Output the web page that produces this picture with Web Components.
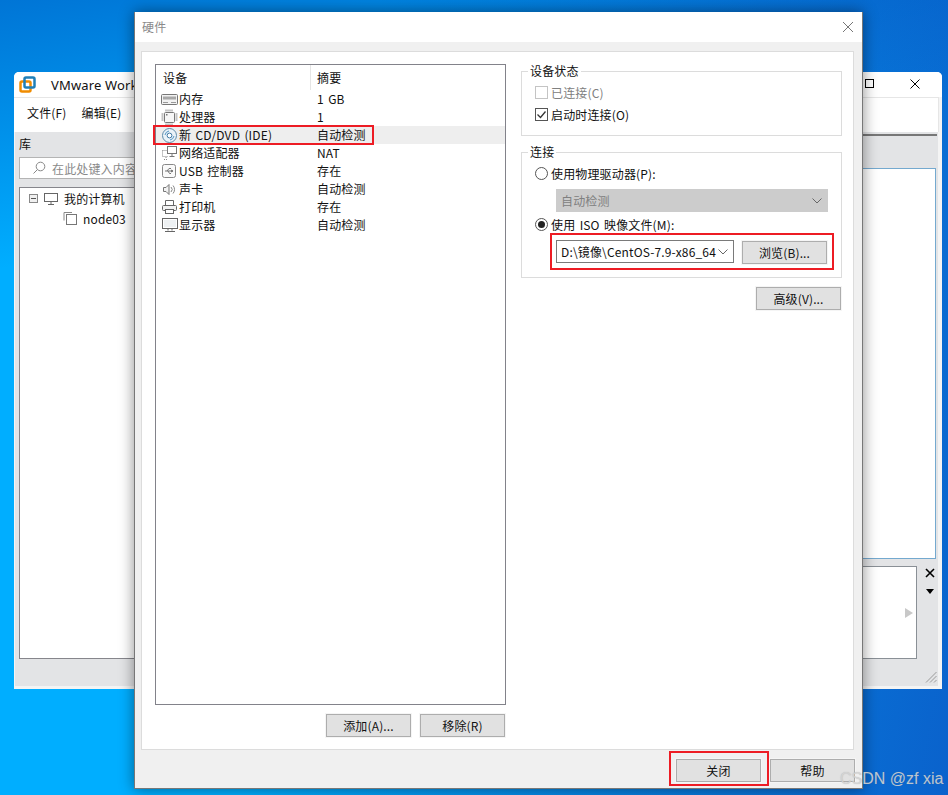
<!DOCTYPE html>
<html lang="zh">
<head>
<meta charset="utf-8">
<title>硬件</title>
<style>
html,body{margin:0;padding:0;height:100%;overflow:hidden}
body{font:12px "Noto Sans CJK SC","Noto Sans",sans-serif;color:#111;letter-spacing:.15px;word-spacing:1.5px}
</style>
</head>
<body>
<desk-top>
  <back-window></back-window>
  <hw-dialog></hw-dialog>
  <water-mark>CSDN @zf xia</water-mark>
</desk-top>

<script>
const FONT = '"Noto Sans CJK SC","Noto Sans",sans-serif';

const ICONS = {
  memory: '<rect x="0.500" y="3.500" width="16" height="10" rx="1" fill="#f2f2f2" stroke="#777"/><path d="M2 5.500h13v3H2z" fill="#a8a8a8"/><path d="M2 11.500h5M10 11.500h5" stroke="#999"/>',
  cpu: '<rect x="3.500" y="3.500" width="10" height="10" rx="1" fill="#f6f6f6" stroke="#777"/><path d="M5 .5v2M7 .5v2M9 .5v2M11 .5v2M5 14.500v2M7 14.500v2M9 14.500v2M11 14.500v2M.5 5h2M.5 7h2M.5 9h2M.5 11h2M14.500 5h2M14.500 7h2M14.500 9h2M14.500 11h2" stroke="#888"/><path d="M5 5h1.500v1.500H5z" fill="#777"/>',
  cd: '<circle cx="8.500" cy="8.500" r="7" fill="#eaf2f8" stroke="#5f8cab"/><circle cx="8.500" cy="8.500" r="2.400" fill="#fff" stroke="#3f78a3"/><path d="M4 8a5 5 0 0 1 4-4M13 9a5 5 0 0 1-4 4" stroke="#4f93c4" fill="none"/>',
  net: '<rect x="6.500" y="1.500" width="9" height="7" fill="#fff" stroke="#777"/><path d="M11 9v2M8.500 11.500h5" stroke="#777"/><path d="M1.500 5.500h5M1.500 5.500v6h6M3 14.500h4M5 12v2" stroke="#888" stroke-dasharray="1 1" fill="none"/>',
  usb: '<rect x="1.500" y="1.500" width="13" height="13" rx="2" fill="#fafafa" stroke="#888"/><path d="M4 8h8M6 8l2-2.500h2M7 8l1.500 2.500H10M12 8l-1.500-1v2z" stroke="#777" fill="none"/>',
  sound: '<path d="M2.500 6.500h2.500l3-3v10l-3-3H2.500z" fill="#f2f2f2" stroke="#777"/><path d="M10 6a3.500 3.500 0 0 1 0 5M12 4.500a6 6 0 0 1 0 8" stroke="#888" fill="none"/>',
  printer: '<path d="M4.500 6V1.500h8V6" fill="#fff" stroke="#666"/><rect x="1.500" y="6.500" width="14" height="5" rx="1" fill="#f2f2f2" stroke="#666"/><rect x="4.500" y="10.500" width="8" height="4" fill="#fff" stroke="#666"/>',
  monitor: '<rect x="1.500" y="1.500" width="15" height="10" fill="#fff" stroke="#666"/><path d="M3 3h12v7H3z" fill="#eef1f3"/><path d="M7 12v1.500M11 12v1.500" stroke="#666"/><path d="M4 14.500h10" stroke="#666"/>'
};

class WinButton extends HTMLElement {
  constructor() {
    super();
    this.attachShadow({ mode: 'open' }).innerHTML = `
    <style>
      :host{display:inline-flex;align-items:center;justify-content:center;box-sizing:border-box;
        width:85px;height:23px;background:#e1e1e1;border:1px solid #adadad;outline:1px solid #f5f5f5;
        font:12px ${FONT};color:#111;flex:none}
    </style><slot></slot>`;
  }
}
customElements.define('win-button', WinButton);

class RedMark extends HTMLElement {
  constructor() {
    super();
    this.attachShadow({ mode: 'open' }).innerHTML = `
    <style>
      :host{display:block;position:relative}
      i{position:absolute;inset:var(--inset,0);border:2px solid #ed1c24;pointer-events:none;z-index:2}
    </style><slot></slot><i></i>`;
  }
}
customElements.define('red-mark', RedMark);

class HwRow extends HTMLElement {
  constructor() {
    super();
    this.attachShadow({ mode: 'open' });
  }
  connectedCallback() {
    const icon = this.getAttribute('icon');
    this.shadowRoot.innerHTML = `
    <style>
      :host{display:grid;grid-template-columns:155px 1fr;height:18px;align-items:center;line-height:18px}
      :host([selected]){background:#eeeeee}
      .dev{display:flex;align-items:center;padding-left:5px;gap:1px;white-space:pre}
      svg{width:17px;height:17px;flex:none}
      .sum{padding-left:6px}
    </style>
    <div class="dev"><svg viewBox="0 0 17 17">${ICONS[icon]}</svg><span>${this.getAttribute('name')}</span></div>
    <div class="sum">${this.getAttribute('sum')}</div>`;
  }
}
customElements.define('hw-row', HwRow);

class HwList extends HTMLElement {
  constructor() {
    super();
    this.attachShadow({ mode: 'open' }).innerHTML = `
    <style>
      :host{display:block;box-sizing:border-box;width:351px;height:641px;background:#fff;border:1px solid #82828a}
      header{display:grid;grid-template-columns:155px 1fr;height:25px;line-height:25px}
      header div:first-child{padding-left:7px;border-right:1px solid #e5e5e5;box-sizing:border-box}
      header div:last-child{padding-left:6px}
    </style>
    <header><div>设备</div><div>摘要</div></header>
    <slot></slot>`;
  }
}
customElements.define('hw-list', HwList);

class GroupBox extends HTMLElement {
  constructor() {
    super();
    this.attachShadow({ mode: 'open' });
  }
  connectedCallback() {
    this.shadowRoot.innerHTML = `
    <style>
      :host{display:block}
      fieldset{margin:0;border:1px solid #dcdcdc;padding:var(--pad);min-width:0}
      legend{margin-left:-7px;padding:0 2px;line-height:14px;font-size:12px}
    </style>
    <fieldset><legend>${this.getAttribute('label')}</legend><slot></slot></fieldset>`;
  }
}
customElements.define('group-box', GroupBox);

class OptRow extends HTMLElement {
  constructor() {
    super();
    this.attachShadow({ mode: 'open' });
  }
  connectedCallback() {
    const type = this.getAttribute('type');
    const on = this.hasAttribute('on');
    const off = this.hasAttribute('disabled');
    let mark;
    if (type === 'radio') {
      mark = `<circle cx="6.500" cy="6.500" r="6" fill="#fff" stroke="#555"/>` + (on ? `<circle cx="6.500" cy="6.500" r="3.500" fill="#222"/>` : '');
    } else {
      mark = `<rect x="0.500" y="0.500" width="12" height="12" fill="#fff" stroke="${off ? '#c4c4c4' : '#555'}"/>` + (on ? `<path d="M2.500 6.500l3 3 5-6" fill="none" stroke="#333" stroke-width="1.300"/>` : '');
    }
    this.shadowRoot.innerHTML = `
    <style>
      :host{display:flex;align-items:center;height:22px;gap:3px;white-space:pre;color:${off ? '#808080' : 'inherit'}}
      svg{width:13px;height:13px;flex:none}
    </style>
    <svg viewBox="0 0 13 13">${mark}</svg><slot></slot>`;
  }
}
customElements.define('opt-row', OptRow);

class DropBox extends HTMLElement {
  constructor() {
    super();
    this.attachShadow({ mode: 'open' }).innerHTML = `
    <style>
      :host{display:flex;align-items:center;justify-content:space-between;box-sizing:border-box;height:23px;padding:0 5px 0 4px;
        background:#fff;border:1px solid #7a7a7a;white-space:pre;overflow:hidden}
      :host([disabled]){background:#cccccc;border-color:#cccccc;color:#808080}
      svg{width:10px;height:6px;flex:none}
    </style>
    <slot></slot><svg viewBox="0 0 10 6"><path d="M.5.5L5 5 9.500.5" fill="none" stroke="#666"/></svg>`;
  }
}
customElements.define('drop-box', DropBox);

class HwDialog extends HTMLElement {
  constructor() {
    super();
    this.attachShadow({ mode: 'open' }).innerHTML = `
    <style>
      :host{position:absolute;left:134px;top:12px;width:729px;height:777px;box-sizing:border-box;
        display:flex;flex-direction:column;background:#f0f0f0;border:1px solid #777;border-top:0;
        box-shadow:0 0 14px rgba(0,0,0,.45);color:#111}
      .title{height:30px;flex:none;background:#fff;display:flex;align-items:center;justify-content:space-between;
        padding:0 8px 1px 7px;box-sizing:border-box;color:#8a8a8a}
      .title svg{width:12px;height:12px}
      .panel{margin:9px 8px 0 6px;height:699px;box-sizing:border-box;flex:none;background:#fff;border:1px solid #dcdcdc;
        padding:12px 0 0 13px;display:grid;grid-template-columns:351px 321px;column-gap:15px;align-content:start}
      .left{display:flex;flex-direction:column;gap:9px}
      .btns{display:flex;justify-content:flex-end;gap:9px;padding-right:1px}
      .right{display:flex;flex-direction:column}
      .st{--pad:3px 0 10px 13px}
      .cn{--pad:3px 0 13px 13px;margin-top:9px}
      .sel{margin:5px 0 1px 21px;width:272px}
      .iso{display:flex;gap:8px}
      .iso drop-box{width:178px}
      .iso win-button{margin-top:1px}
      .isomark{--inset:-7px -7px -6px -6px;width:271px;margin:5px 0 0 21px}
      .adv{align-self:flex-end;margin:9px 1px 0 0}
      .foot{flex:1;display:flex;align-items:flex-start;justify-content:flex-end;gap:9px;padding:9px 7px 0 0;box-sizing:border-box}
      .foot red-mark{--inset:-8px -8px -4px -7px}
      .foot win-button{display:flex}
    </style>
    <div class="title"><span>硬件</span><svg viewBox="0 0 12 12"><path d="M1 1l10 10M11 1L1 11" stroke="#777" fill="none"/></svg></div>
    <div class="panel">
      <div class="left">
        <hw-list>
          <hw-row icon="memory" name="内存" sum="1 GB"></hw-row>
          <hw-row icon="cpu" name="处理器" sum="1"></hw-row>
          <red-mark style="--inset:-1px 131px -1px -3px"><hw-row selected icon="cd" name="新 CD/DVD (IDE)" sum="自动检测"></hw-row></red-mark>
          <hw-row icon="net" name="网络适配器" sum="NAT"></hw-row>
          <hw-row icon="usb" name="USB 控制器" sum="存在"></hw-row>
          <hw-row icon="sound" name="声卡" sum="自动检测"></hw-row>
          <hw-row icon="printer" name="打印机" sum="存在"></hw-row>
          <hw-row icon="monitor" name="显示器" sum="自动检测"></hw-row>
        </hw-list>
        <div class="btns"><win-button>添加(A)...</win-button><win-button>移除(R)</win-button></div>
      </div>
      <div class="right">
        <group-box class="st" label="设备状态">
          <opt-row type="check" disabled>已连接(C)</opt-row>
          <opt-row type="check" on>启动时连接(O)</opt-row>
        </group-box>
        <group-box class="cn" label="连接">
          <opt-row type="radio">使用物理驱动器(P):</opt-row>
          <drop-box class="sel" disabled>自动检测</drop-box>
          <opt-row type="radio" on>使用 ISO 映像文件(M):</opt-row>
          <red-mark class="isomark">
            <div class="iso"><drop-box>D:\\镜像\\CentOS-7.9-x86_64</drop-box><win-button>浏览(B)...</win-button></div>
          </red-mark>
        </group-box>
        <win-button class="adv">高级(V)...</win-button>
      </div>
    </div>
    <div class="foot">
      <red-mark><win-button>关闭</win-button></red-mark>
      <win-button>帮助</win-button>
    </div>`;
  }
}
customElements.define('hw-dialog', HwDialog);

class BackWindow extends HTMLElement {
  constructor() {
    super();
    this.attachShadow({ mode: 'open' }).innerHTML = `
    <style>
      :host{position:absolute;left:14px;top:72px;width:928px;height:617px;display:flex;flex-direction:column;
        background:#f4f4f4;border-radius:5px 5px 0 0;overflow:hidden;color:#111}
      .bar{height:25px;flex:none;background:#fff;display:flex;align-items:center;padding-left:5px}
      .logo{width:17px;height:17px;flex:none}
      .name{margin-left:15px;font:13px "Noto Sans",sans-serif;white-space:nowrap;flex:1;word-spacing:0}
      .ctl{display:flex;align-items:center;padding-bottom:2px}
      .max{width:7px;height:7px;border:1px solid #000;margin-right:36px}
      .cls{width:10px;height:10px;margin-right:22px}
      .menu{height:35px;flex:none;box-sizing:border-box;background:#fff;border-top:1px solid #e6e6e6;border-right:1px solid #e6e6e6;
        margin-right:3px;display:flex;align-items:center;gap:15px;padding:0 0 5px 13px}
      .body{flex:1;background:#e3e4e6;margin:0 4px 3px 1px;display:grid;grid-template-columns:294px 1fr;position:relative}
      .side{padding:0 0 27px 4px;display:flex;flex-direction:column}
      .lib{height:25px;line-height:24px;flex:none}
      .search{height:22px;box-sizing:border-box;background:#fff;border:1px solid #b4b4b4;display:flex;align-items:center;gap:6px;
        padding-left:12px;color:#8a8a8a;white-space:nowrap;overflow:hidden;flex:none}
      .search svg{width:14px;height:14px;flex:none}
      .tree{flex:1;margin-top:8px;background:#fff;border:1px solid #86868c}
      .node{display:flex;align-items:center;height:20px;white-space:nowrap}
      .node svg{flex:none}
      .main{display:flex;flex-direction:column;padding:2px 0 27px 0}
      .tabline{height:2px;background:#777;flex:none;margin-right:1px}
      .top{flex:1;margin:32px 2px 0 0;background:#fff;border:1px solid #74a9cf}
      .low{display:flex;margin-top:7px;height:93px;flex:none}
      .summary{flex:1;background:#fff;border:1px solid #8a9096;display:flex;align-items:center;justify-content:flex-end;padding-right:3px}
      .summary svg{width:8px;height:10px}
      .tools{width:21px;box-sizing:border-box;flex:none;display:flex;flex-direction:column;align-items:center;padding:2px 0 0 4px;gap:11px}
      .grip{position:absolute;right:1px;bottom:3px;width:12px;height:12px}
    </style>
    <div class="bar">
      <svg class="logo" viewBox="0 0 17 17">
        <rect x="1.500" y="5.500" width="10" height="10" rx="1.500" fill="none" stroke="#f08c00" stroke-width="2.500"/>
        <rect x="5.500" y="1.500" width="10" height="10" rx="1.500" fill="none" stroke="#1f7fb8" stroke-width="2.500"/>
      </svg>
      <div class="name">VMware Work</div>
      <div class="ctl"><div class="max"></div><svg class="cls" viewBox="0 0 10 10"><path d="M.5.5l9 9M9.500.5l-9 9" stroke="#000" fill="none"/></svg></div>
    </div>
    <div class="menu"><span>文件(F)</span><span>编辑(E)</span></div>
    <div class="body">
      <div class="side">
        <div class="lib">库</div>
        <div class="search">
          <svg viewBox="0 0 14 14"><circle cx="8.500" cy="5.500" r="4.300" fill="none" stroke="#888"/><path d="M5.500 8.500L1.500 12.500" stroke="#888" fill="none"/></svg>
          <span>在此处键入内容</span>
        </div>
        <div class="tree">
          <div class="node" style="padding-left:9px;gap:6px">
            <svg width="9" height="9" viewBox="0 0 9 9"><rect x=".5" y=".5" width="8" height="8" fill="#f0f0f0" stroke="#888"/><path d="M2 4.500h5" stroke="#555"/></svg>
            <svg width="14" height="13" viewBox="0 0 14 13"><rect x=".5" y="1.500" width="13" height="8" fill="#fff" stroke="#666"/><path d="M7 10v2M4 12.500h6" stroke="#666"/></svg>
            <span>我的计算机</span>
          </div>
          <div class="node" style="padding-left:43px;gap:6px">
            <svg width="14" height="14" viewBox="0 0 14 14"><path d="M1 9.500V1.500h8" fill="none" stroke="#888"/><rect x="3.500" y="3.500" width="10" height="10" fill="#fff" stroke="#777"/></svg>
            <span>node03</span>
          </div>
        </div>
      </div>
      <div class="main">
        <div class="tabline"></div>
        <div class="top"></div>
        <div class="low">
          <div class="summary"><svg viewBox="0 0 8 10"><path d="M0 0l8 5-8 5z" fill="#c8c8c8"/></svg></div>
          <div class="tools">
            <svg width="10" height="10" viewBox="0 0 10 10"><path d="M1 1l8 8M9 1l-8 8" stroke="#000" stroke-width="1.600" fill="none"/></svg>
            <svg width="8" height="5" viewBox="0 0 8 5"><path d="M0 0h8L4 5z" fill="#000"/></svg>
          </div>
        </div>
      </div>
      <svg class="grip" viewBox="0 0 12 12"><path d="M11.500 1L1 11.500M11.500 5L5 11.500M11.500 9L9 11.500" stroke="#9a9a9a" fill="none"/></svg>
    </div>`;
  }
}
customElements.define('back-window', BackWindow);

class WaterMark extends HTMLElement {
  constructor() {
    super();
    this.attachShadow({ mode: 'open' }).innerHTML = `
    <style>
      :host{position:absolute;left:840px;top:770px;font:16px/18px "Liberation Sans",sans-serif;letter-spacing:0;word-spacing:0;color:rgba(215,215,215,.85);white-space:nowrap;
        text-shadow:0 0 1px rgba(120,120,120,.4)}
    </style><slot></slot>`;
  }
}
customElements.define('water-mark', WaterMark);

class DeskTop extends HTMLElement {
  constructor() {
    super();
    this.attachShadow({ mode: 'open' }).innerHTML = `
    <style>
      :host{display:block;position:relative;width:948px;height:795px;overflow:hidden;
        background:linear-gradient(170deg,rgba(0,70,180,.55) 0,rgba(0,70,180,0) 28%),
          linear-gradient(100deg,#00aeff 0,#00aeff 35%,#0780e0 70%,#0a62cc 100%)}
    </style><slot></slot>`;
  }
}
customElements.define('desk-top', DeskTop);
</script>
</body>
</html>
